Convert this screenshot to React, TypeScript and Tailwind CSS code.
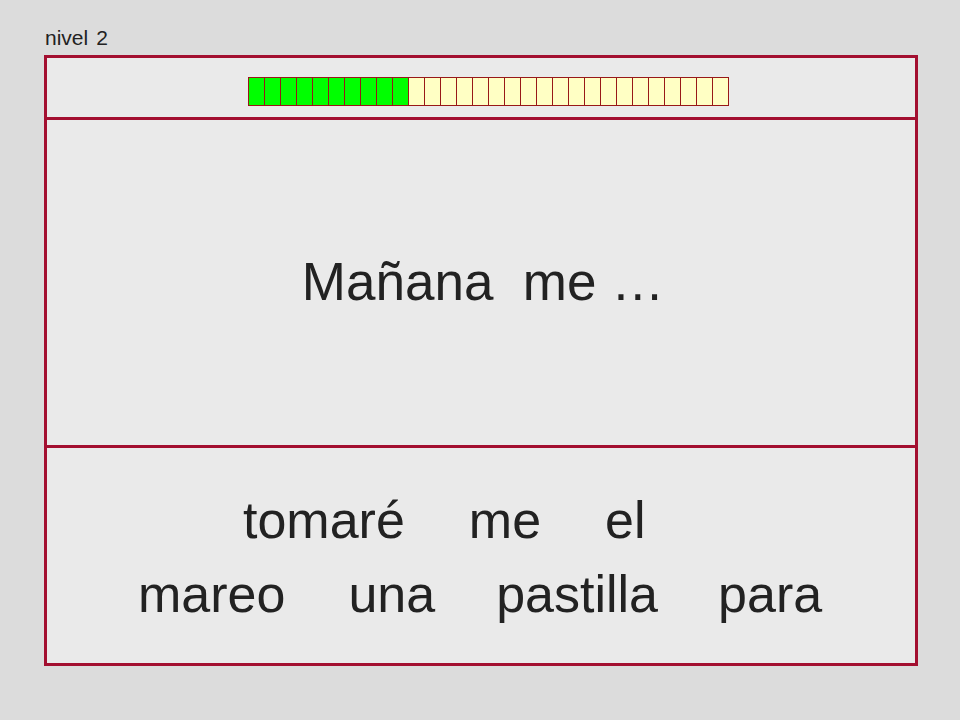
const filled = 10;
const total = 30;

export default function App() {
  return (
    <div className="w-[960px] h-[720px] bg-[#dcdcdc] text-[#222] font-['Liberation_Sans',Arial,sans-serif] pt-[27px]">
      <div className="pl-[45px] text-[21px] leading-[22px] h-[28px] flex">
        <span>nivel</span>
        <span className="ml-[8px]">2</span>
      </div>

      <div className="ml-[44px] w-[874px] h-[611px] border-[3px] border-[#a30f30] bg-[#eaeaea] flex flex-col">
        {/* progress */}
        <div className="h-[62px] border-b-[3px] border-[#a30f30] flex items-start justify-center pt-[19px] pl-[14px]">
          <div className="flex border-l border-[#981818]">
            {Array.from({ length: total }).map((_, i) => (
              <div
                key={i}
                className={
                  'w-[16px] h-[29px] border-y border-r border-[#981818] ' +
                  (i < filled ? 'bg-[#00ff00]' : 'bg-[#ffffc4]')
                }
              />
            ))}
          </div>
        </div>

        {/* question */}
        <div className="h-[328px] border-b-[3px] border-[#a30f30] flex items-center justify-center">
          <div className="text-[53px] leading-none pl-[4px] pb-[2px] whitespace-pre">Mañana  me …</div>
        </div>

        {/* words */}
        <div className="flex-1 flex flex-col pt-[46px] text-[52px] leading-none">
          <div className="flex gap-[64px] pl-[196px]">
            <span>tomaré</span>
            <span>me</span>
            <span>el</span>
          </div>
          <div className="flex pl-[91px] mt-[22px]">
            <span>mareo</span>
            <span className="ml-[63px]">una</span>
            <span className="ml-[61px]">pastilla</span>
            <span className="ml-[60px]">para</span>
          </div>
        </div>
      </div>
    </div>
  );
}
